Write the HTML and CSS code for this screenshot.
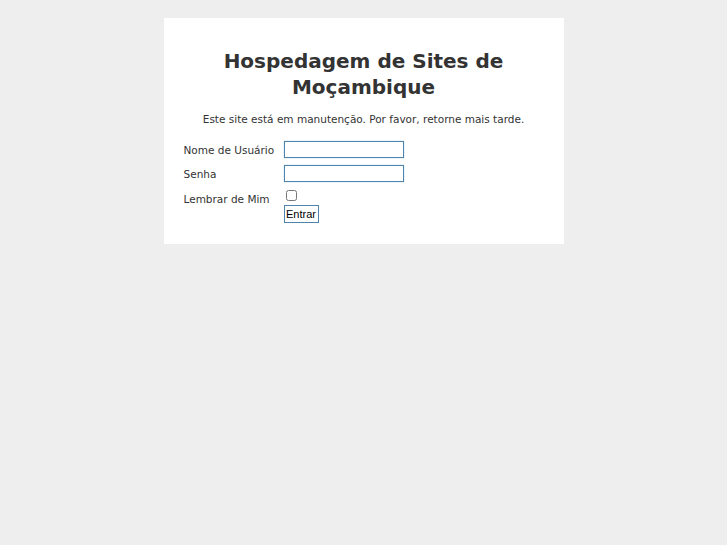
FILE: index.html
```html
<!DOCTYPE html>
<html lang="pt">
<head>
    <meta charset="utf-8">
    <title>Hospedagem de Sites de Moçambique</title>
    <link rel="stylesheet" href="styles.css">
</head>
<body>

<div class="box">
    <h1>Hospedagem de Sites de Moçambique</h1>
    <p class="message">Este site está em manutenção. Por favor, retorne mais tarde.</p>

    <form class="login">
        <label for="username">Nome de Usuário</label>
        <input id="username" name="username" type="text"/>

        <label for="passwd">Senha</label>
        <input id="passwd" name="passwd" type="password"/>

        <label for="remember">Lembrar de Mim</label>
        <div class="remember">
            <input id="remember" name="remember" type="checkbox"/>
            <button type="submit">Entrar</button>
        </div>
    </form>
</div>

</body>
</html>
```
FILE: styles.css
```css
body {
    margin: 0;
    padding-top: 18px;
    background: #eeeeee;
    font-family: "DejaVu Sans", sans-serif;
    color: #333333;
}

.box {
    width: 400px;
    height: 226px;
    box-sizing: border-box;
    margin: 0 auto;
    padding: 30px 20px 20px;
    background: #ffffff;
}

.box h1 {
    margin: 0;
    font-size: 20px;
    line-height: 26px;
    text-align: center;
}

.box .message {
    margin: 12px 0 15px;
    font-size: 10.5px;
    line-height: 14px;
    text-align: center;
}

.login {
    display: grid;
    grid-template-columns: 100px 1fr;
    row-gap: 7px;
    font-size: 10.5px;
    align-items: center;
}

.login label {
    line-height: 15px;
    padding-top: 2px;
}

.login input[type=text],
.login input[type=password] {
    width: 120px;
    height: 17px;
    box-sizing: border-box;
    margin: 0;
    border: 1px solid #4f84b0;
    box-shadow: 0 0 1px #9cc0dc;
    padding: 1px 3px;
}

.login label[for=remember] {
    align-self: start;
    margin-top: 1px;
}

.remember {
    display: flex;
    flex-direction: column;
    align-items: flex-start;
    gap: 4px;
}

.remember input {
    width: 11px;
    height: 11px;
    margin: 1px 0 0 2px;
}

.remember button {
    width: 35px;
    height: 18px;
    margin: 0;
    padding: 0;
    border: 1px solid #4f84b0;
    background: #ffffff;
    color: #000000;
    font-family: "Liberation Sans", sans-serif;
    font-size: 11px;
}
```
